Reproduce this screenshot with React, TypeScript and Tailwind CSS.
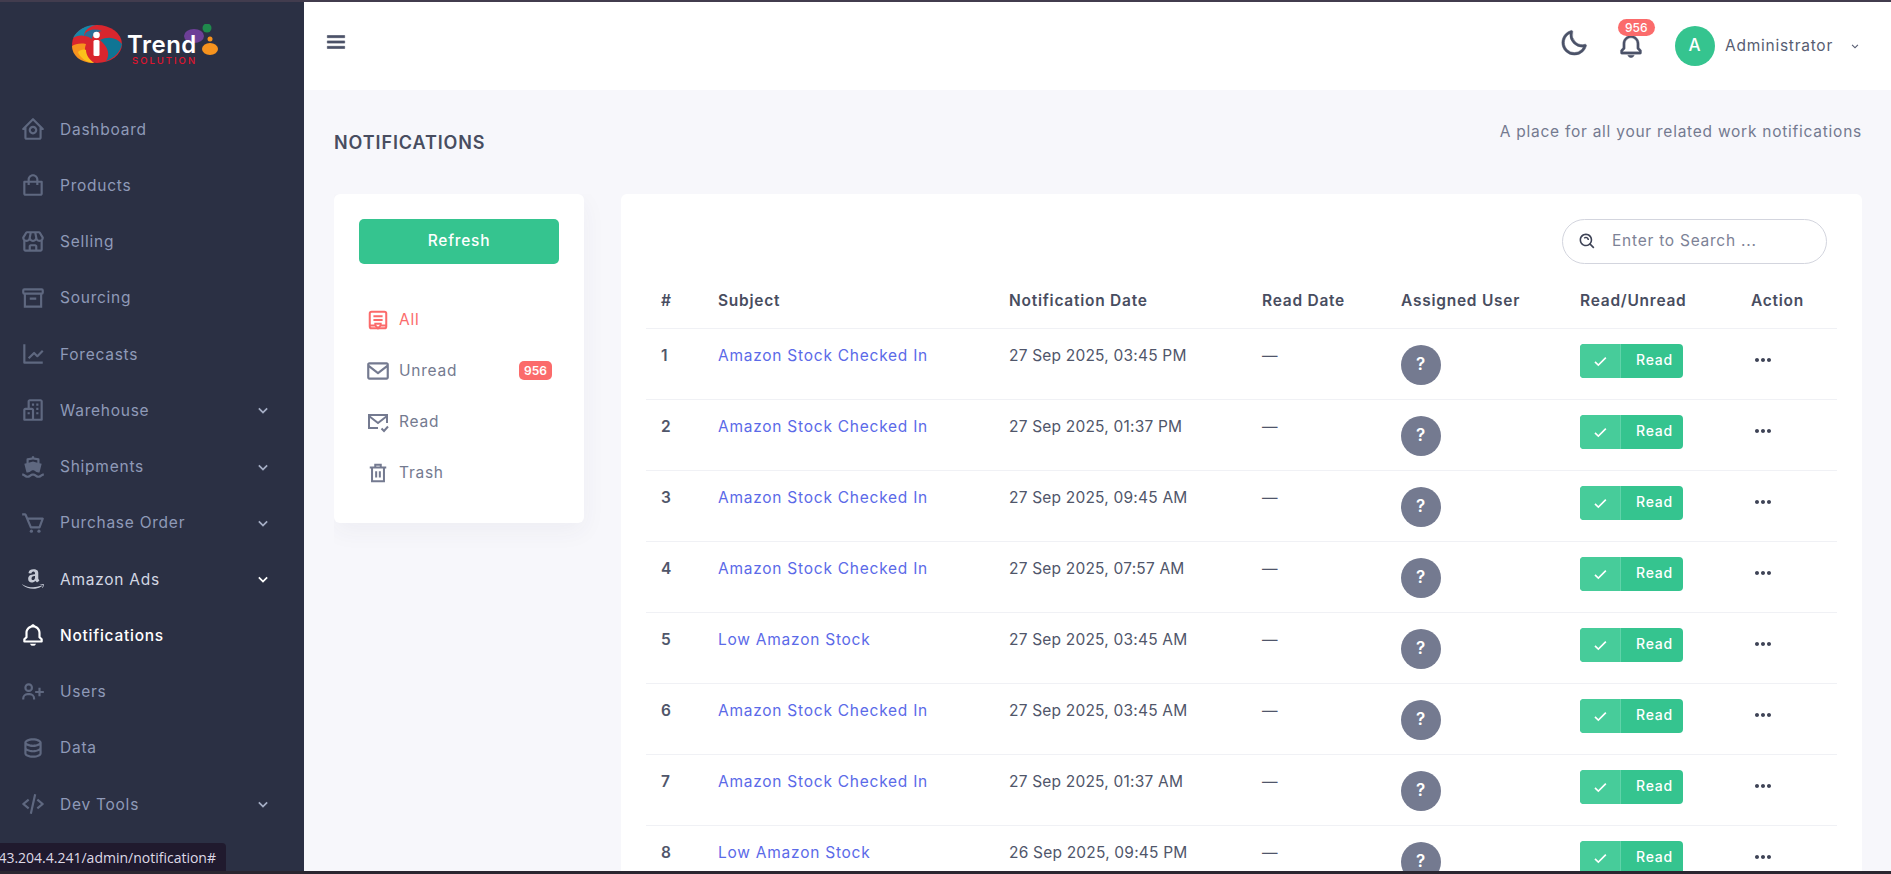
import type { ReactNode } from "react";
import {
  BiBell,
  BiBuildings,
  BiCart,
  BiCheck,
  BiChevronDown,
  BiCodeAlt,
  BiData,
  BiDotsHorizontalRounded,
  BiEnvelope,
  BiHomeCircle,
  BiLineChart,
  BiLogoAmazon,
  BiMenu,
  BiMoon,
  BiSearchAlt,
  BiShoppingBag,
  BiSolidShip,
  BiStore,
  BiUserPlus,
} from "react-icons/bi";

const ArchiveBox = () => (
  <svg viewBox="0 0 24 24" width="1em" height="1em" fill="none" stroke="currentColor" strokeWidth="2" className="block">
    <rect x="3" y="4" width="18" height="4" rx="1" />
    <path d="M4.5 8v12h15V8M9 12.5h6" />
  </svg>
);

const navItems = [
  { label: "Dashboard", icon: <BiHomeCircle /> },
  { label: "Products", icon: <BiShoppingBag /> },
  { label: "Selling", icon: <BiStore /> },
  { label: "Sourcing", icon: <ArchiveBox /> },
  { label: "Forecasts", icon: <BiLineChart /> },
  { label: "Warehouse", icon: <BiBuildings />, sub: true },
  { label: "Shipments", icon: <BiSolidShip />, sub: true },
  { label: "Purchase Order", icon: <BiCart />, sub: true },
  { label: "Amazon Ads", icon: <BiLogoAmazon />, sub: true, bright: true },
  { label: "Notifications", icon: <BiBell />, active: true },
  { label: "Users", icon: <BiUserPlus /> },
  { label: "Data", icon: <BiData /> },
  { label: "Dev Tools", icon: <BiCodeAlt />, sub: true },
];

const rows = [
  { id: 1, subject: "Amazon Stock Checked In", date: "27 Sep 2025, 03:45 PM" },
  { id: 2, subject: "Amazon Stock Checked In", date: "27 Sep 2025, 01:37 PM" },
  { id: 3, subject: "Amazon Stock Checked In", date: "27 Sep 2025, 09:45 AM" },
  { id: 4, subject: "Amazon Stock Checked In", date: "27 Sep 2025, 07:57 AM" },
  { id: 5, subject: "Low Amazon Stock", date: "27 Sep 2025, 03:45 AM" },
  { id: 6, subject: "Amazon Stock Checked In", date: "27 Sep 2025, 03:45 AM" },
  { id: 7, subject: "Amazon Stock Checked In", date: "27 Sep 2025, 01:37 AM" },
  { id: 8, subject: "Low Amazon Stock", date: "26 Sep 2025, 09:45 PM" },
];

const Logo = () => (
  <svg width="150" height="44" viewBox="0 0 150 44" className="block">
    <ellipse cx="25" cy="20" rx="25" ry="19" fill="#d9262e" />
    <path d="M1 14C6 5 14 1 24 1C16 3 12 7 12 12C8 11 4 12 1 14Z" fill="#1587a8" />
    <path d="M12 12C14 6 22 4 30 7C24 8 20 11 20 15C17 13 15 12 12 12Z" fill="#2a6f97" />
    <path d="M28 16C36 12 44 13 50 20C48 29 42 34 34 37C38 31 37 24 28 16Z" fill="#0f7594" />
    <path d="M0 22C0 31 8 39 22 39C14 35 11 28 14 20C8 19 3 20 0 22Z" fill="#f7931e" />
    <path d="M6 28C8 34 14 38 22 39C17 35 14 31 14 26C11 25 8 26 6 28Z" fill="#fcc21b" />
    <rect x="21.5" y="16" width="6" height="16" rx="1.5" fill="#fff" />
    <circle cx="24.5" cy="11" r="3.3" fill="#fff" />
    <ellipse cx="122" cy="12" rx="10" ry="7" fill="#6d3f97" />
    <text x="55" y="29" fill="#fff" fontSize="24" fontWeight="600" fontFamily="Inter, sans-serif" letterSpacing="0.5">
      Trend
    </text>
    <text x="60" y="40" fill="#e0142e" fontSize="9.5" fontWeight="500" letterSpacing="2" fontFamily="Inter, sans-serif">
      SOLUTION
    </text>
    <circle cx="135" cy="4" r="4.5" fill="#1f8a4c" />
    <circle cx="138" cy="15" r="2.5" fill="#f7931e" />
    <ellipse cx="138" cy="25" rx="8" ry="6" fill="#f7931e" />
  </svg>
);

const NavItem = ({
  label,
  icon,
  sub,
  active,
  bright,
}: {
  label: string;
  icon: ReactNode;
  sub?: boolean;
  active?: boolean;
  bright?: boolean;
}) => (
  <a
    href="#"
    className={`flex h-[56.25px] items-center pl-[20px] pr-[31px] text-[15.5px] ${
      active ? "font-medium text-white" : bright ? "text-[#d3d7e3]" : "text-[#8f9ab8]"
    }`}
  >
    <span
      className={`mr-[14px] text-[26px] ${active ? "text-white" : bright ? "text-[#c6cad6]" : "text-[#5f6880]"}`}
    >
      {icon}
    </span>
    <span className="flex-1">{label}</span>
    {sub && <BiChevronDown className={`text-[20px] ${bright ? "text-white" : "text-[#a4adc4]"}`} />}
  </a>
);

const Sidebar = () => (
  <aside className="h-full w-[304px] shrink-0 bg-[#2b3044]">
    <div className="flex h-[72px] items-start pt-[22px] pl-[72px]">
      <Logo />
    </div>
    <nav className="pt-[27px]">
      {navItems.map((item) => (
        <NavItem key={item.label} {...item} />
      ))}
    </nav>
  </aside>
);

const Topbar = () => (
  <header className="flex h-[88px] shrink-0 items-center bg-white pl-[19px] pr-[29px]">
    <BiMenu className="mb-[8px] stroke-[0.6px] text-[26px] text-[#4b5268]" />
    <div className="ml-auto flex items-center">
      <BiMoon className="mb-[6px] stroke-[0.4px] text-[30px] text-[#4b5268]" />
      <div className="relative ml-[28px] mr-[30px]">
        <BiBell className="stroke-[0.3px] text-[28px] text-[#4b5268]" />
        <span className="absolute -top-[13px] left-[1px] rounded-full bg-[#fb6b6b] px-[7px] text-[12px] leading-[17px] font-medium tracking-normal text-white">
          956
        </span>
      </div>
      <span className="flex size-10 items-center justify-center rounded-full bg-[#35c48f] text-[17px] font-medium text-white">
        A
      </span>
      <span className="ml-[10px] text-[15.5px] text-[#575d72]">Administrator</span>
      <BiChevronDown className="ml-[15px] text-[14px] text-[#575d72]" />
    </div>
  </header>
);

const MailCheck = () => (
  <svg viewBox="0 0 24 24" width="24" height="24" fill="none" stroke="currentColor" strokeWidth="2">
    <path d="M12 18H3V5h18v8" />
    <path d="M3 6l9 7 9-7" />
    <path d="M15.5 18.5l2.5 2.5 4-4.5" />
  </svg>
);

const ReceiptAll = () => (
  <svg viewBox="0 0 24 24" width="22" height="22" fill="none" stroke="currentColor" strokeWidth="2.2">
    <rect x="3" y="3" width="18" height="18" rx="2" />
    <path d="M7 8h10M7 12h10M8 16h8M3 18h6l3 3 3-3h6" />
  </svg>
);

const TrashBars = () => (
  <svg viewBox="0 0 24 24" width="22" height="22" fill="none" stroke="currentColor" strokeWidth="2.2">
    <path d="M3 6h18M9 6V3h6v3M5.5 6v15h13V6M10 10v7M14 10v7" />
  </svg>
);

const FolderItem = ({
  label,
  icon,
  active,
  badge,
}: {
  label: string;
  icon: ReactNode;
  active?: boolean;
  badge?: string;
}) => (
  <a
    href="#"
    className={`flex h-[51px] items-center pl-[6px] pr-[7px] text-[15.5px] ${
      active ? "text-[#fb6b6b]" : "text-[#747a90]"
    }`}
  >
    <span className="flex w-[26px] justify-center text-[26px]">{icon}</span>
    <span className="ml-[8px] flex-1">{label}</span>
    {badge && (
      <span className="rounded-[5px] bg-[#fb6b6b] px-[5px] text-[12px] leading-[19px] font-semibold tracking-normal text-white">
        {badge}
      </span>
    )}
  </a>
);

const FolderCard = () => (
  <section className="h-[329px] w-[250px] shrink-0 rounded-[6px] bg-white px-[25px] pt-[25px] shadow-[0_8px_24px_rgba(60,60,100,0.05)]">
    <button className="h-[45px] w-full rounded-[5px] bg-[#35c48f] pb-[2px] text-[15.5px] font-medium text-white">
      Refresh
    </button>
    <div className="mt-[30px]">
      <FolderItem label="All" icon={<ReceiptAll />} active />
      <FolderItem label="Unread" icon={<BiEnvelope />} badge="956" />
      <FolderItem label="Read" icon={<MailCheck />} />
      <FolderItem label="Trash" icon={<TrashBars />} />
    </div>
  </section>
);

const NotificationRow = ({ id, subject, date }: { id: number; subject: string; date: string }) => (
  <tr className="h-[71px] border-b border-[#f0f1f5] align-top text-[15.5px] text-[#50566a]">
    <td className="px-[15px] pt-[15px] font-semibold">{id}</td>
    <td className="px-[15px] pt-[15px] text-[#5b6ae8]">{subject}</td>
    <td className="px-[15px] pt-[15px] tracking-[0.2px]">{date}</td>
    <td className="px-[15px] pt-[15px]">—</td>
    <td className="px-[15px] pt-[16px]">
      <span className="flex size-10 items-center justify-center rounded-full bg-[#747a90] text-[17px] font-semibold text-white">
        ?
      </span>
    </td>
    <td className="px-[15px] pt-[15px]">
      <span className="flex h-[34px] w-[103px] items-center rounded-[4px] bg-[#35c48f] text-[14px] font-medium text-white">
        <span className="flex h-[34px] w-[41px] items-center justify-center rounded-l-[4px] border-r border-[#5fd3a9] bg-[#47cc9a] pt-[1px] text-[20px]">
          <BiCheck />
        </span>
        <span className="ml-[15px] pb-[2px]">Read</span>
      </span>
    </td>
    <td className="px-[15px] pt-[16px] text-[#3e4356]">
      <BiDotsHorizontalRounded className="mt-[3px] text-[24px]" />
    </td>
  </tr>
);

const NotificationTable = () => (
  <section className="min-w-0 flex-1 rounded-t-[6px] bg-white px-[25px] pt-[25px]">
    <div className="flex justify-end pr-[10px]">
      <label className="flex h-[45px] w-[265px] items-center rounded-full border border-[#d3d5de] pl-[15px]">
        <BiSearchAlt className="text-[19px] text-[#3e4356]" />
        <input
          placeholder="Enter to Search ..."
          className="ml-[15px] w-[190px] pb-[2px] text-[15.5px] outline-none placeholder:text-[#7d8296]"
        />
      </label>
    </div>
    <table className="mt-[10px] w-[1191px] table-fixed border-collapse text-left">
      <colgroup>
        <col className="w-[57px]" />
        <col className="w-[291px]" />
        <col className="w-[253px]" />
        <col className="w-[139px]" />
        <col className="w-[179px]" />
        <col className="w-[171px]" />
        <col className="w-[101px]" />
      </colgroup>
      <thead>
        <tr className="border-b border-[#f0f1f5] text-[15.5px] text-[#484d60]">
          {["#", "Subject", "Notification Date", "Read Date", "Assigned User", "Read/Unread", "Action"].map((h) => (
            <th key={h} className="h-[54px] px-[15px] font-semibold">
              {h}
            </th>
          ))}
        </tr>
      </thead>
      <tbody>
        {rows.map((row) => (
          <NotificationRow key={row.id} {...row} />
        ))}
      </tbody>
    </table>
  </section>
);

const App = () => (
  <div className="relative h-[874px] overflow-hidden border-t-2 border-b-[3px] border-t-[#423c4e] border-b-[#2a2630] bg-[#f7f7fb] font-['Inter',sans-serif] tracking-[0.75px]">
    <div className="flex h-full">
      <Sidebar />
      <main className="flex h-full min-w-0 flex-1 flex-col overflow-hidden">
        <Topbar />
        <div className="flex flex-1 flex-col overflow-hidden pl-[30px] pr-[29px]">
          <div className="flex h-[104px] shrink-0 items-start justify-between">
            <h1 className="pt-[39px] text-[18px] font-semibold tracking-[0.9px] text-[#484d60]">NOTIFICATIONS</h1>
            <p className="pt-[30px] text-[15.5px] text-[#747a90]">A place for all your related work notifications</p>
          </div>
          <div className="flex flex-1 items-start gap-[37px] overflow-hidden">
            <FolderCard />
            <NotificationTable />
          </div>
        </div>
      </main>
    </div>
    <div className="absolute bottom-0 left-0 flex h-[28px] w-[226px] items-center justify-end overflow-hidden rounded-tr-[4px] bg-[#201a2e] pr-[10px] font-['Open_Sans',sans-serif] text-[14px] tracking-normal whitespace-nowrap text-[#ded9e6]">
      43.204.4.241/admin/notification#
    </div>
  </div>
);

export default App;
